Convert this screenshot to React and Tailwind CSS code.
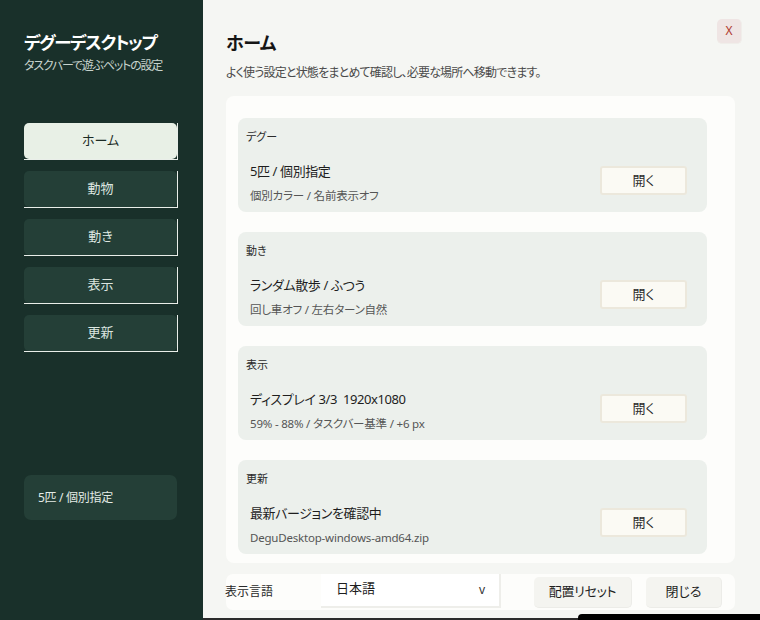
import React from "react";

const font = { fontFamily: '"Noto Sans", "Noto Sans CJK JP", sans-serif' };

const navItems = ["ホーム", "動物", "動き", "表示", "更新"];

const sections = [
  { label: "デグー", main: "5匹 / 個別指定", sub: "個別カラー / 名前表示オフ" },
  { label: "動き", main: "ランダム散歩 / ふつう", sub: "回し車オフ / 左右ターン自然" },
  { label: "表示", main: "ディスプレイ 3/3\u00a0\u00a01920x1080", sub: "59% - 88% / タスクバー基準 / +6 px" },
  { label: "更新", main: "最新バージョンを確認中", sub: "DeguDesktop-windows-amd64.zip" },
];

function NavButton({ label, active }) {
  return (
    <div className="w-[154px] h-[37px] border-r border-b border-[#e9eee9]">
      <div
        className={
          active
            ? "h-full rounded-[5px] bg-[#e8f0e6] flex items-center justify-center text-[13px] text-[#1b2b25]"
            : "h-full rounded-[5px] bg-[#243f37] flex items-center justify-center text-[13px] text-[#dce6e0]"
        }
      >
        {label}
      </div>
    </div>
  );
}

function Section({ label, main, sub }) {
  return (
    <div className="h-[94px] shrink-0 rounded-[8px] bg-[#ecf0ec] pt-[11px]">
      <div className="pl-[8px] text-[11px] leading-[16px] text-[#2a2a2a]">{label}</div>
      <div className="mt-[17px] flex items-start justify-between pl-[12px] pr-[20px]">
        <div className="flex flex-col">
          <div className="text-[13px] leading-[18px] tracking-[-0.4px] text-[#1e1e1e]">{main}</div>
          <div className="mt-[8px] text-[11.5px] leading-[16px] tracking-[-0.2px] text-[#555]">{sub}</div>
        </div>
        <div className="mt-[4px] w-[87px] h-[29px] rounded-[3px] border-2 border-[#ece8dc] bg-[#fbfaf4] flex items-center justify-center text-[13px] text-[#2a2a2a]">
          開く
        </div>
      </div>
    </div>
  );
}

export default function App() {
  return (
    <div className="w-[760px] h-[620px] flex overflow-hidden relative [font-feature-settings:'palt']" style={font}>
      {/* Sidebar */}
      <div className="w-[203px] shrink-0 h-full bg-[#19302a] pt-[30px] pl-[24px] flex flex-col">
        <div className="text-[17.5px] leading-[24px] font-bold tracking-[-1.3px] text-white">デグーデスクトップ</div>
        <div className="mt-[4px] text-[12px] leading-[16px] tracking-[-1.2px] text-[#c7d3cd]">タスクバーで遊ぶペットの設定</div>
        <div className="mt-[49px] flex flex-col gap-[11px]">
          {navItems.map((n, i) => (
            <NavButton key={n} label={n} active={i === 0} />
          ))}
        </div>
        <div className="mt-[123px] w-[153px] h-[45px] rounded-[7px] bg-[#243f37] flex items-center pl-[14px] text-[12px] tracking-[-0.3px] text-[#e3ebe6]">
          5匹 / 個別指定
        </div>
      </div>

      {/* Main */}
      <div className="flex-1 h-full bg-[#f5f6f3] flex flex-col relative">
        <div className="flex-1 pt-[31px] pl-[23px] pr-[25px] flex flex-col">
          <div className="text-[18px] leading-[24px] font-bold tracking-[-0.5px] text-[#151515]">ホーム</div>
          <div className="mt-[10px] text-[12px] leading-[16px] tracking-[-0.8px] text-[#4a4a4a]">
            よく使う設定と状態をまとめて確認し、必要な場所へ移動できます。
          </div>
          <div className="mt-[15px] h-[467px] rounded-[8px] bg-[#fdfdfb] overflow-hidden pt-[22px] pl-[12px] pr-[28px] flex flex-col gap-[20px]">
            {sections.map((s) => (
              <Section key={s.label} {...s} />
            ))}
          </div>
          <div className="mt-[11px] h-[36px] rounded-[7px] bg-[#fdfdfb] flex items-stretch">
            <div className="w-[96px] flex items-center text-[12px] text-[#2a2a2a] -ml-[1px]">表示言語</div>
            <div className="w-[180px] h-[34px] bg-white border-r-2 border-b-2 border-[#eeeeea] flex items-center justify-between pl-[15px] pr-[14px] text-[13px] text-[#1e1e1e]">
              <span className="-mt-[3px]">日本語</span>
              <span className="text-[12px] text-[#333]">v</span>
            </div>
            <div className="ml-[33px] mt-[3px] w-[98px] h-[31px] rounded-[5px] bg-[#f4f4f0] border-r border-b border-[#ecece8] flex items-center justify-center text-[13px] tracking-[-0.3px] text-[#1e1e1e]">
              配置リセット
            </div>
            <div className="ml-[14px] mt-[3px] w-[76px] h-[31px] rounded-[5px] bg-[#f4f4f0] border-r border-b border-[#ecece8] flex items-center justify-center text-[13px] text-[#1e1e1e]">
              閉じる
            </div>
          </div>
        </div>
        <div className="h-[2px] bg-[#2b2b2b]" />

        {/* close X */}
        <div className="absolute top-[19px] right-[18px] w-[25px] h-[25px] rounded-[5px] bg-[#efe5e4] border-r border-b border-[#f0eeea] flex items-center justify-center text-[12px] text-[#b0392e]">
          X
        </div>
        <div className="absolute bottom-0 left-[375px] right-0 h-[6px] bg-black rounded-tl-[4px]" />
      </div>
    </div>
  );
}
